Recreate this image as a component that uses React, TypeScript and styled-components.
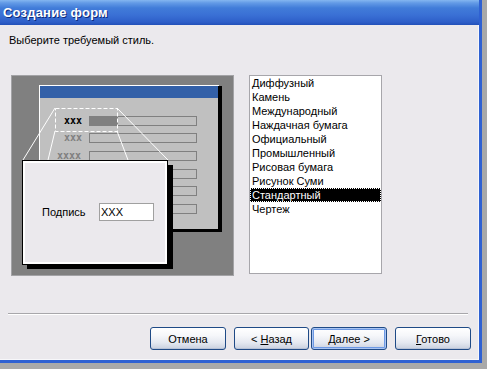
import React from "react";
import styled, { createGlobalStyle } from "styled-components";

const UI_FONT = `"Liberation Sans", Arial, sans-serif`;
const FRAME_BLUE = "#2f61d2";

const STYLES = [
  "Диффузный",
  "Камень",
  "Международный",
  "Наждачная бумага",
  "Официальный",
  "Промышленный",
  "Рисовая бумага",
  "Рисунок Суми",
  "Стандартный",
  "Чертеж",
];
const SELECTED = "Стандартный";

const GlobalStyle = createGlobalStyle`
  html, body {
    margin: 0;
    padding: 0;
  }
  body {
    background: #a9a9a9;
    font-family: ${UI_FONT};
    font-size: 11px;
    color: #000;
  }
`;

const Window = styled.div`
  width: 479px;
  height: 360px;
  display: flex;
  flex-direction: column;
  background: #ebe9ed;
  border-right: 3px solid ${FRAME_BLUE};
  border-bottom: 3px solid ${FRAME_BLUE};
  box-shadow: inset -1px -1px 0 #f7f7fa;
`;

const TitleBar = styled.div`
  height: 25px;
  flex: none;
  display: flex;
  align-items: center;
  padding-left: 3px;
  background: linear-gradient(
    #84b6f0 0px,
    #629ae6 3px,
    #417cd9 8px,
    #3a70d5 15px,
    #2e5fc9 22px,
    #2250b9 25px
  );
  color: #fff;
  font-weight: bold;
  font-size: 13px;
  text-shadow: 1px 1px 0 #0d2a7a;
  letter-spacing: 0.2px;
`;

const Body = styled.div`
  flex: 1;
  display: flex;
  flex-direction: column;
`;

const Prompt = styled.div`
  padding: 9px 0 0 9px;
  height: 13px;
  line-height: 13px;
`;

const Content = styled.div`
  display: flex;
  gap: 15px;
  margin-top: 28px;
  padding-left: 11px;
`;

const PreviewBox = styled.svg`
  display: block;
  flex: none;
`;

const ListBox = styled.div`
  width: 131px;
  height: 197px;
  background: #fff;
  border: 1px solid #a7a6ab;
`;

const ListItem = styled.div<{ $selected?: boolean }>`
  height: 14px;
  line-height: 14px;
  padding-left: 2px;
  white-space: nowrap;
  background: ${(p) => (p.$selected ? "#000" : "transparent")};
  color: ${(p) => (p.$selected ? "#fff" : "#000")};
  outline: ${(p) => (p.$selected ? "1px dotted #fff" : "none")};
  outline-offset: -1px;
`;

const Separator = styled.div`
  margin: 37px 11px 0 8px;
  border-top: 1px solid #a8a7ab;
  border-bottom: 1px solid #fff;
`;

const ButtonRow = styled.div`
  display: flex;
  justify-content: flex-end;
  margin-top: 12px;
  padding-right: 8px;
`;

const Button = styled.button<{ $width?: number; $gap?: number; $default?: boolean }>`
  width: ${(p) => p.$width ?? 76}px;
  height: 23px;
  margin-left: ${(p) => p.$gap ?? 0}px;
  padding: 0;
  font-family: ${UI_FONT};
  font-size: 11px;
  color: #000;
  border: 1px solid #1f4a86;
  border-radius: 3px;
  background: linear-gradient(
    #ffffff 0%,
    #f6f7fa 35%,
    #e4e8f0 70%,
    #c9d0df 100%
  );
  box-shadow: ${(p) =>
    p.$default
      ? "inset 0 0 0 1px #a9c4f2, inset 0 0 0 2px #6d99e4"
      : "inset 0 -1px 0 #b8c2d6"};

  u {
    text-decoration: underline;
  }
`;

const LABEL_FONT = `"DejaVu Sans Mono", monospace`;
const ROW_TOPS = [41, 58, 76, 94, 111, 129];

function StylePreview() {
  return (
    <PreviewBox width={223} height={201} viewBox="0 0 223 201">
      <rect x={0.5} y={0.5} width={222} height={200} fill="#808080" stroke="#a3a3a6" />

      {/* form window */}
      <rect x={29} y={11} width={182} height={146} fill="#000" />
      <rect x={28} y={10} width={179} height={144} fill="#c0c0c0" />
      <rect x={28} y={10} width={1} height={144} fill="#fff" />
      <rect x={28} y={10} width={180} height={1} fill="#fff" />
      <rect x={29} y={11} width={178} height={12} fill="#3360a8" />

      {ROW_TOPS.map((top, i) => (
        <rect
          key={top}
          x={i === 0 ? 106.5 : 78.5}
          y={top + 0.5}
          width={i === 0 ? 79 : 107}
          height={9}
          fill="none"
          stroke="#808080"
        />
      ))}
      <rect x={78} y={41} width={28} height={10} fill="#808080" />

      <text x={71} y={49} textAnchor="end" fontFamily={LABEL_FONT} fontWeight="bold" fontSize={10} fill="#000">
        xxx
      </text>
      <text x={71} y={66} textAnchor="end" fontFamily={LABEL_FONT} fontWeight="bold" fontSize={10} fill="#808080">
        xxx
      </text>
      <text x={70} y={84} textAnchor="end" fontFamily={LABEL_FONT} fontWeight="bold" fontSize={10} fill="#808080">
        xxxx
      </text>

      {/* zoom callout */}
      <rect x={44.5} y={33.5} width={62} height={23} fill="none" stroke="#fff" strokeDasharray="4 2" />
      <g stroke="#fff" strokeWidth={1}>
        <line x1={44} y1={33} x2={12} y2={85} />
        <line x1={44} y1={56} x2={37} y2={85} />
        <line x1={106} y1={33} x2={157} y2={85} />
        <line x1={106} y1={56} x2={117} y2={85} />
      </g>

      <rect x={16} y={90} width={146} height={104} fill="#000" />
      <rect x={11} y={85} width={146} height={105} fill="#000" />
      <rect x={12} y={86} width={144} height={103} fill="#fff" />
      <rect x={14} y={88} width={140} height={99} fill="#ebe9ed" />

      <text x={31} y={141} fontFamily={UI_FONT} fontSize={11} fill="#000">
        Подпись
      </text>
      <rect x={88.5} y={128.5} width={54} height={17} fill="#fff" stroke="#a0a0a0" />
      <text x={90} y={141} fontFamily={UI_FONT} fontSize={11} fill="#000">
        XXX
      </text>
    </PreviewBox>
  );
}

export default function App() {
  return (
    <>
      <GlobalStyle />
      <Window>
        <TitleBar>Создание форм</TitleBar>
        <Body>
          <Prompt>Выберите требуемый стиль.</Prompt>
          <Content>
            <StylePreview />
            <ListBox>
              {STYLES.map((s) => (
                <ListItem key={s} $selected={s === SELECTED}>
                  {s}
                </ListItem>
              ))}
            </ListBox>
          </Content>
          <Separator />
          <ButtonRow>
            <Button>Отмена</Button>
            <Button $gap={8} $width={75}>
              &lt; <u>Н</u>азад
            </Button>
            <Button $gap={2} $default>
              <u>Д</u>алее &gt;
            </Button>
            <Button $gap={8}>
              <u>Г</u>отово
            </Button>
          </ButtonRow>
        </Body>
      </Window>
    </>
  );
}
